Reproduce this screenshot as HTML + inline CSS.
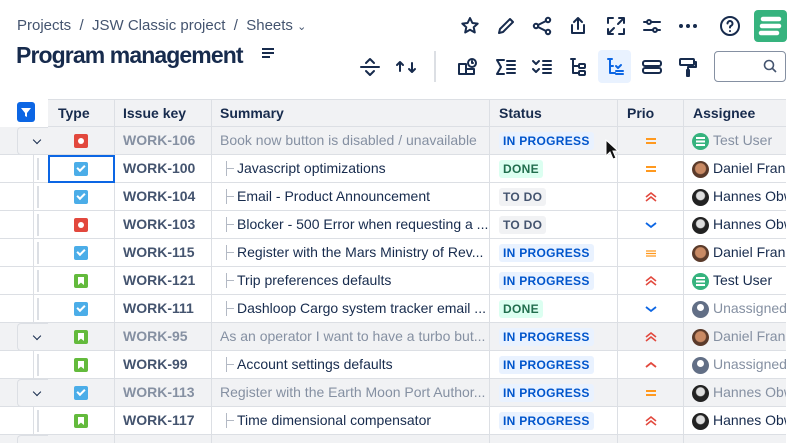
<!DOCTYPE html>
<html><head><meta charset="utf-8"><style>
*{box-sizing:border-box;margin:0;padding:0}
body{width:800px;height:443px;overflow:hidden;background:#fff;font-family:"Liberation Sans",sans-serif;color:#172b4d;position:relative}
.a{position:absolute}
.bc{left:17px;top:17px;font-size:15px;color:#44546f;white-space:nowrap}
.title{left:16px;top:42px;font-size:23px;font-weight:bold;color:#172b4d;letter-spacing:-0.9px;white-space:nowrap}
.ic{position:absolute;width:24px;height:24px}
.ic svg{width:24px;height:24px;fill:none;stroke:#172b4d;stroke-width:2;stroke-linecap:round;stroke-linejoin:round}
.row{position:absolute;left:0;width:800px;height:28px;border-bottom:1px solid #dcdfe4}
.row.p{background:#f1f2f4}
.c{position:absolute;top:0;height:28px;line-height:27px;font-size:14px;white-space:nowrap;overflow:hidden;border-right:1px solid #dcdfe4}
.k{left:115px;width:97px;padding-left:8px;font-weight:bold;color:#44546f}
.t{left:48px;width:67px}
.s{left:212px;width:278px;padding-left:25px}
.st{left:490px;width:128px;padding-left:9px}
.pr{left:618px;width:66px}
.as{left:684px;width:102px;padding-left:29px;border-right:none}
.p .k,.p .s,.p .as{color:#8590a2}
.p .s{padding-left:8px}
.tree{position:absolute;left:14px;top:6px;width:8px;height:15px;border-left:1px solid #b3b9c4}
.tree:after{content:"";position:absolute;left:0;top:7px;width:7px;border-top:1px solid #b3b9c4}
.lz{display:inline-block;font-size:12px;font-weight:bold;line-height:18px;padding:0 4px;border-radius:3px;letter-spacing:.3px;vertical-align:middle}
.ip{background:#e9f2ff;color:#0055cc}
.dn{background:#dcfff1;color:#216e4e}
.td{background:#f1f2f4;color:#44546f}
.ty{position:absolute;left:26px;top:7px;width:14px;height:14px;border-radius:2px}
.bug{background:#e2483d}.bug:after{content:"";position:absolute;left:4px;top:4px;width:6px;height:6px;border-radius:50%;background:#fff}
.task{background:#4bade8}.task:after{content:"";position:absolute;left:3px;top:3px;width:6px;height:3px;border-left:2px solid #fff;border-bottom:2px solid #fff;transform:rotate(-45deg)}
.story{background:#63ba3c}.story:after{content:"";position:absolute;left:4px;top:3px;width:6px;height:8px;background:#fff;clip-path:polygon(0 0,100% 0,100% 100%,50% 70%,0 100%)}
.av{position:absolute;left:8px;top:6px;width:17px;height:17px;border-radius:50%}
.g{background:#36b37e}.g:after{content:"";position:absolute;left:4px;top:4px;width:9px;height:9px;background:repeating-linear-gradient(#fff 0 2px,transparent 2px 3.5px)}
.df{background:radial-gradient(circle at 50% 45%,#c98a64 0 5px,#5a3a2a 6px)}
.ho{background:radial-gradient(circle at 50% 40%,#ddd 0 4px,#222 5px)}
.un{background:#626f86}.un:after{content:"";position:absolute;left:5px;top:3px;width:7px;height:7px;border-radius:50%;background:#fff}
.gut{position:absolute;left:17px;width:31px;height:28px}
.gp{border:1px solid #dcdfe4;border-right:none;border-radius:4px 0 0 4px;background:#f1f2f4}
.gc{border-left:1px solid #dcdfe4;left:33px;width:15px}
.gc:before{content:"";position:absolute;left:3px;top:3px;height:22px;border-left:2px solid #dcdfe4}
.chev{position:absolute;left:16px;top:9px;width:6px;height:6px;border-right:1.6px solid #172b4d;border-bottom:1.6px solid #172b4d;transform:rotate(45deg)}
.prio{position:absolute;left:27px;top:8px;width:12px;height:12px}
</style></head><body>
<div class="a bc">Projects &nbsp;/&nbsp; JSW Classic project &nbsp;/&nbsp; Sheets <span style="font-size:11px">&#8964;</span></div>
<div class="a title">Program management</div>
<svg class="a" style="left:261px;top:47px" width="14" height="12"><path d="M1 2h12M1 6h12M1 10h8" stroke="#172b4d" stroke-width="2"/></svg>

<div class="ic" style="left:458px;top:14px"><svg viewBox="0 0 24 24"><path d="M12 4l2.4 5 5.3.6-4 3.6 1.1 5.3L12 15.8 7.2 18.5l1.1-5.3-4-3.6 5.3-.6z"/></svg></div>
<div class="ic" style="left:494px;top:14px"><svg viewBox="0 0 24 24"><path d="M5 19l1-4L16 5l3 3L9 18z"/></svg></div>
<div class="ic" style="left:530px;top:14px"><svg viewBox="0 0 24 24"><circle cx="18" cy="6" r="2.2"/><circle cx="6" cy="12" r="2.2"/><circle cx="18" cy="18" r="2.2"/><path d="M8 11l8-4M8 13l8 4"/></svg></div>
<div class="ic" style="left:566px;top:14px"><svg viewBox="0 0 24 24"><path d="M12 4v11M8 8l4-4 4 4M6 11v8h12v-8"/></svg></div>
<div class="ic" style="left:604px;top:14px"><svg viewBox="0 0 24 24"><path d="M4 9V4h5M15 4h5v5M20 15v5h-5M9 20H4v-5M5 19l5-5M19 5l-5 5"/></svg></div>
<div class="ic" style="left:640px;top:14px"><svg viewBox="0 0 24 24"><path d="M4 8h16M4 16h16"/><circle cx="9" cy="8" r="2" fill="#fff"/><circle cx="15" cy="16" r="2" fill="#fff"/></svg></div>
<div class="ic" style="left:676px;top:14px"><svg viewBox="0 0 24 24"><circle cx="5" cy="12" r="1" fill="#172b4d"/><circle cx="12" cy="12" r="1" fill="#172b4d"/><circle cx="19" cy="12" r="1" fill="#172b4d"/></svg></div>
<div class="ic" style="left:718px;top:14px"><svg viewBox="0 0 24 24"><circle cx="12" cy="12" r="9"/><path d="M9.5 9.5a2.5 2.5 0 1 1 3.5 2.3c-.7.3-1 .9-1 1.7M12 17v.1"/></svg></div>
<div class="a" style="left:754px;top:10px;width:33px;height:32px;background:#36b37e;border-radius:4px"><svg width="33" height="32"><path d="M9 9h16M8 16h17M7 23h16" stroke="#fff" stroke-width="4.5" stroke-linecap="round"/></svg></div>

<div class="ic" style="left:358px;top:55px"><svg viewBox="0 0 24 24"><path d="M3 12h18M8 8l4-4 4 4M8 16l4 4 4-4"/></svg></div>
<div class="ic" style="left:394px;top:55px"><svg viewBox="0 0 24 24"><path d="M6 16V7M3 10l3-3 3 3M18 8v9M15 14l3 3 3-3"/></svg></div>
<div class="a" style="left:434px;top:51px;width:2px;height:31px;background:#dcdfe4"></div>
<div class="ic" style="left:456px;top:55px"><svg viewBox="0 0 24 24"><path d="M3 9h7v10H3zM10 14h8v5h-8"/><circle cx="16" cy="8" r="4"/><path d="M16 6v2h1"/></svg></div>
<div class="ic" style="left:494px;top:55px"><svg viewBox="0 0 24 24"><path d="M10 5H3l4 7-4 7h7M13 6h8M13 10h8M13 14h8M13 18h8"/></svg></div>
<div class="ic" style="left:530px;top:55px"><svg viewBox="0 0 24 24"><path d="M3 6l3 3 3-3M3 14l3 3 3-3M13 6h8M13 10h8M13 14h8M13 18h8"/></svg></div>
<div class="a" style="left:598px;top:50px;width:33px;height:33px;background:#e9f2ff;border-radius:4px"></div>
<div class="ic" style="left:566px;top:55px"><svg viewBox="0 0 24 24"><path d="M5 4h4M7 4v14h5M7 11h5"/><rect x="13" y="9" width="6" height="4" rx="1"/><rect x="13" y="16" width="6" height="4" rx="1"/></svg></div>
<div class="ic" style="left:603px;top:55px"><svg viewBox="0 0 24 24" style="stroke:#0c66e4"><path d="M5 4h4M7 4v14h5M7 11h3M13 11l2 2 3-3M13 16h7M13 19h7"/></svg></div>
<div class="ic" style="left:640px;top:55px"><svg viewBox="0 0 24 24"><rect x="3" y="6" width="18" height="5" rx="2"/><rect x="3" y="13" width="18" height="5" rx="2"/></svg></div>
<div class="ic" style="left:676px;top:55px"><svg viewBox="0 0 24 24"><rect x="4" y="4" width="14" height="6" rx="1"/><path d="M18 7h2v5h-8v3M11 15h2v6h-2z"/></svg></div>
<div class="a" style="left:714px;top:51px;width:72px;height:31px;border:1.5px solid #8590a2;border-radius:4px"><svg style="position:absolute;left:48px;top:7px" width="14" height="14"><circle cx="6" cy="6" r="4.5" stroke="#44546f" stroke-width="1.6" fill="none"/><path d="M9.5 9.5L13 13" stroke="#44546f" stroke-width="1.6"/></svg></div>

<div class="a" style="left:17px;top:102px;width:18px;height:20px;background:#0c66e4;border-radius:3px"><svg width="18" height="20"><path d="M4 6h10l-4 5v4l-2-1v-3z" fill="#fff"/></svg></div>

<div class="row" style="top:99px;background:#f1f2f4;left:48px;width:738px;border-top:1px solid #dcdfe4">
<div class="c t" style="left:0;padding-left:10px;font-weight:bold">Type</div>
<div class="c" style="left:67px;width:97px;padding-left:8px;font-weight:bold">Issue key</div>
<div class="c" style="left:164px;width:278px;padding-left:8px;font-weight:bold">Summary</div>
<div class="c" style="left:442px;width:128px;padding-left:9px;font-weight:bold">Status</div>
<div class="c" style="left:570px;width:66px;padding-left:9px;font-weight:bold">Prio</div>
<div class="c" style="left:636px;width:102px;padding-left:9px;font-weight:bold;border-right:none">Assignee</div>
</div>

<div style="position:absolute;left:0;top:0;width:786px;height:443px;overflow:hidden">
<div class="row p" style="top:127px"><div class="gut gp"><div class="chev"></div></div><div class="c t"><div class="ty bug"></div></div><div class="c k">WORK-106</div><div class="c s">Book now button is disabled / unavailable</div><div class="c st"><span class="lz ip">IN PROGRESS</span></div><div class="c pr"><svg class="prio" viewBox="0 0 12 12"><path d="M1 4h10M1 8h10" stroke="#ff991f" stroke-width="2"/></svg></div><div class="c as"><div class="av g"></div>Test User</div></div>

<div class="row" style="top:155px"><div class="gut gc"></div><div class="c t" style="outline:2px solid #0c66e4;outline-offset:-2px"><div class="ty task"></div></div><div class="c k">WORK-100</div><div class="c s"><div class="tree"></div>Javascript optimizations</div><div class="c st"><span class="lz dn">DONE</span></div><div class="c pr"><svg class="prio" viewBox="0 0 12 12"><path d="M1 4h10M1 8h10" stroke="#ff991f" stroke-width="2"/></svg></div><div class="c as"><div class="av df"></div>Daniel Franz</div></div>

<div class="row" style="top:183px"><div class="gut gc"></div><div class="c t"><div class="ty task"></div></div><div class="c k">WORK-104</div><div class="c s"><div class="tree"></div>Email - Product Announcement</div><div class="c st"><span class="lz td">TO DO</span></div><div class="c pr"><svg class="prio" viewBox="0 0 12 12"><path d="M1 6l5-4 5 4M1 10l5-4 5 4" stroke="#e2483d" stroke-width="1.6" fill="none"/></svg></div><div class="c as"><div class="av ho"></div>Hannes Obw</div></div>

<div class="row" style="top:211px"><div class="gut gc"></div><div class="c t"><div class="ty bug"></div></div><div class="c k">WORK-103</div><div class="c s"><div class="tree"></div>Blocker - 500 Error when requesting a ...</div><div class="c st"><span class="lz td">TO DO</span></div><div class="c pr"><svg class="prio" viewBox="0 0 12 12"><path d="M1 4l5 4 5-4" stroke="#0c66e4" stroke-width="1.8" fill="none"/></svg></div><div class="c as"><div class="av ho"></div>Hannes Obw</div></div>

<div class="row" style="top:239px"><div class="gut gc"></div><div class="c t"><div class="ty task"></div></div><div class="c k">WORK-115</div><div class="c s"><div class="tree"></div>Register with the Mars Ministry of Rev...</div><div class="c st"><span class="lz ip">IN PROGRESS</span></div><div class="c pr"><svg class="prio" viewBox="0 0 12 12"><path d="M1 4h10M1 6.5h10M1 9h10" stroke="#ff991f" stroke-width="1.2"/></svg></div><div class="c as"><div class="av df"></div>Daniel Franz</div></div>

<div class="row" style="top:267px"><div class="gut gc"></div><div class="c t"><div class="ty story"></div></div><div class="c k">WORK-121</div><div class="c s"><div class="tree"></div>Trip preferences defaults</div><div class="c st"><span class="lz ip">IN PROGRESS</span></div><div class="c pr"><svg class="prio" viewBox="0 0 12 12"><path d="M1 6l5-4 5 4M1 10l5-4 5 4" stroke="#e2483d" stroke-width="1.6" fill="none"/></svg></div><div class="c as" style="color:#172b4d"><div class="av g"></div>Test User</div></div>

<div class="row" style="top:295px"><div class="gut gc"></div><div class="c t"><div class="ty task"></div></div><div class="c k">WORK-111</div><div class="c s"><div class="tree"></div>Dashloop Cargo system tracker email ...</div><div class="c st"><span class="lz dn">DONE</span></div><div class="c pr"><svg class="prio" viewBox="0 0 12 12"><path d="M1 4l5 4 5-4" stroke="#0c66e4" stroke-width="1.8" fill="none"/></svg></div><div class="c as" style="color:#8590a2"><div class="av un"></div>Unassigned</div></div>

<div class="row p" style="top:323px"><div class="gut gp"><div class="chev"></div></div><div class="c t"><div class="ty story"></div></div><div class="c k">WORK-95</div><div class="c s">As an operator I want to have a turbo but...</div><div class="c st"><span class="lz ip">IN PROGRESS</span></div><div class="c pr"><svg class="prio" viewBox="0 0 12 12"><path d="M1 6l5-4 5 4M1 10l5-4 5 4" stroke="#e2483d" stroke-width="1.6" fill="none"/></svg></div><div class="c as"><div class="av df"></div>Daniel Franz</div></div>

<div class="row" style="top:351px"><div class="gut gc"></div><div class="c t"><div class="ty story"></div></div><div class="c k">WORK-99</div><div class="c s"><div class="tree"></div>Account settings defaults</div><div class="c st"><span class="lz ip">IN PROGRESS</span></div><div class="c pr"><svg class="prio" viewBox="0 0 12 12"><path d="M1 8l5-4 5 4" stroke="#e2483d" stroke-width="1.8" fill="none"/></svg></div><div class="c as" style="color:#8590a2"><div class="av un"></div>Unassigned</div></div>

<div class="row p" style="top:379px"><div class="gut gp"><div class="chev"></div></div><div class="c t"><div class="ty task"></div></div><div class="c k">WORK-113</div><div class="c s">Register with the Earth Moon Port Author...</div><div class="c st"><span class="lz ip">IN PROGRESS</span></div><div class="c pr"><svg class="prio" viewBox="0 0 12 12"><path d="M1 4h10M1 8h10" stroke="#ff991f" stroke-width="2"/></svg></div><div class="c as"><div class="av ho"></div>Hannes Obw</div></div>

<div class="row" style="top:407px"><div class="gut gc"></div><div class="c t"><div class="ty story"></div></div><div class="c k">WORK-117</div><div class="c s"><div class="tree"></div>Time dimensional compensator</div><div class="c st"><span class="lz ip">IN PROGRESS</span></div><div class="c pr"><svg class="prio" viewBox="0 0 12 12"><path d="M1 6l5-4 5 4M1 10l5-4 5 4" stroke="#e2483d" stroke-width="1.6" fill="none"/></svg></div><div class="c as"><div class="av ho"></div>Hannes Obw</div></div>

<div class="row p" style="top:435px"><div class="gut gp"></div><div class="c t"></div><div class="c k"></div><div class="c s"></div><div class="c st"></div><div class="c pr"></div><div class="c as"></div></div>
</div>

<svg class="a" style="left:605px;top:139px" width="14" height="22"><path d="M1 1v16l4-4 3 7 3-1-3-7h5z" fill="#111" stroke="#fff" stroke-width="1"/></svg>
</body></html>
